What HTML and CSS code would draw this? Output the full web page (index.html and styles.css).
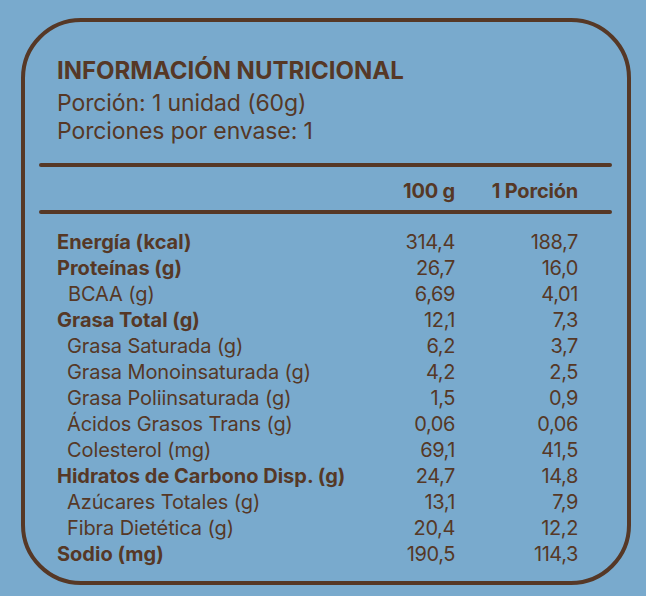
FILE: index.html
```html
<!DOCTYPE html>
<html lang="es">
<head>
<meta charset="utf-8">
<title>Información nutricional</title>
<link rel="stylesheet" href="styles.css">
</head>
<body>
<div class="card">
  <div class="head">
    <h1 class="title">INFORMACIÓN NUTRICIONAL</h1>
    <p class="sub">Porción: 1 unidad (60g)</p>
    <p class="sub">Porciones por envase: 1</p>
  </div>
  <div class="rule"></div>
  <div class="row colhead"><span></span><span class="v">100 g</span><span class="v">1 Porción</span></div>
  <div class="rule"></div>
  <div class="rows">
    <div class="row main"><span>Energía (kcal)</span><span class="v">314,4</span><span class="v">188,7</span></div>
    <div class="row main"><span>Proteínas (g)</span><span class="v">26,7</span><span class="v">16,0</span></div>
    <div class="row sub1"><span>BCAA (g)</span><span class="v">6,69</span><span class="v">4,01</span></div>
    <div class="row main"><span>Grasa Total (g)</span><span class="v">12,1</span><span class="v">7,3</span></div>
    <div class="row sub2"><span>Grasa Saturada (g)</span><span class="v">6,2</span><span class="v">3,7</span></div>
    <div class="row sub2"><span>Grasa Monoinsaturada (g)</span><span class="v">4,2</span><span class="v">2,5</span></div>
    <div class="row sub2"><span>Grasa Poliinsaturada (g)</span><span class="v">1,5</span><span class="v">0,9</span></div>
    <div class="row sub2"><span>Ácidos Grasos Trans (g)</span><span class="v">0,06</span><span class="v">0,06</span></div>
    <div class="row sub2"><span>Colesterol (mg)</span><span class="v">69,1</span><span class="v">41,5</span></div>
    <div class="row main"><span>Hidratos de Carbono Disp. (g)</span><span class="v">24,7</span><span class="v">14,8</span></div>
    <div class="row sub2"><span>Azúcares Totales (g)</span><span class="v">13,1</span><span class="v">7,9</span></div>
    <div class="row sub2"><span>Fibra Dietética (g)</span><span class="v">20,4</span><span class="v">12,2</span></div>
    <div class="row main"><span>Sodio (mg)</span><span class="v">190,5</span><span class="v">114,3</span></div>
  </div>
</div>
</body>
</html>
```
FILE: styles.css
```css
html, body {
  margin: 0;
  padding: 0;
}
body {
  background: #79aacd;
  color: #563826;
  font-family: Inter, "Noto Sans", sans-serif;
  width: 646px;
  height: 596px;
  overflow: hidden;
}
.card {
  box-sizing: border-box;
  margin: 18px 0 0 21px;
  width: 610px;
  height: 567px;
  border: 4px solid #563826;
  border-radius: 60px;
  padding: 34px 15px 0 14px;
}
.head {
  padding-left: 18px;
}
.title {
  margin: 0;
  font-size: 24px;
  line-height: 30px;
  font-weight: 700;
  letter-spacing: 0;
}
.sub {
  margin: 0;
  font-size: 23px;
  line-height: 28px;
  font-weight: 400;
  letter-spacing: -0.1px;
}
.title + .sub {
  margin-top: 3px;
}
.rule {
  height: 4px;
  border-radius: 2px;
  background: #563826;
}
.head + .rule {
  margin-top: 18px;
}
.row {
  display: grid;
  grid-template-columns: 1fr 100px 123px;
  padding: 0 34px 0 18px;
  font-size: 20px;
  line-height: 26px;
  letter-spacing: -0.1px;
}
.v {
  text-align: right;
  letter-spacing: -0.4px;
}
.colhead {
  margin: 12px 0 7px;
  font-size: 20px;
  line-height: 24px;
  font-weight: 700;
}
.colhead .v {
  letter-spacing: -0.2px;
}
.rows {
  margin-top: 15px;
}
.main {
  font-weight: 700;
}
.main span:first-child {
  letter-spacing: 0;
}
.main .v {
  font-weight: 400;
}
.sub1 span:first-child {
  padding-left: 11px;
}
.sub2 span:first-child {
  padding-left: 10px;
}
```
